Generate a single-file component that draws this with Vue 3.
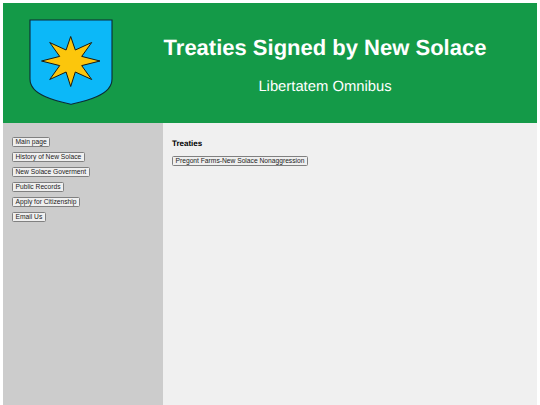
<template>
  <div class="page">
    <header class="banner">
      <div class="crest">
        <svg width="84" height="88" viewBox="0 0 84 88">
          <path d="M1 1H83V60C83 68 76 74 68 77.500C58 82 48 84 42 85.300C36 84 26 82 16 77.500C8 74 1 68 1 60Z" fill="#0cb8f8" stroke="#0c2a35" stroke-width="1.1" />
          <path d="M41.700 17.500 L46.300 31 L62.700 23.500 L52.700 37.400 L71 42 L52.700 46.600 L62.700 60.500 L46.300 53 L41.700 67.500 L37.100 53 L20.700 60.500 L30.700 46.600 L12.500 42 L30.700 37.400 L20.700 23.500 L37.100 31Z" fill="#fcc60c" stroke="#1a1a10" stroke-width="1" stroke-linejoin="miter" />
        </svg>
      </div>
      <div class="titles">
        <h1>Treaties Signed by New Solace</h1>
        <p>Libertatem Omnibus</p>
      </div>
    </header>
    <div class="body">
      <nav class="side">
        <button v-for="l in links" :key="l" class="btn">{{ l }}</button>
      </nav>
      <main class="content">
        <h2>Treaties</h2>
        <button class="btn">Pregont Farms-New Solace Nonaggression</button>
      </main>
    </div>
  </div>
</template>

<script setup>
const links = [
  'Main page',
  'History of New Solace',
  'New Solace Goverment',
  'Public Records',
  'Apply for Citizenship',
  'Email Us',
]
</script>

<style>
html, body { margin: 0; background: #fff; }
</style>

<style scoped>
.page {
  box-sizing: border-box;
  width: 540px;
  height: 405px;
  padding: 3px 3px 0;
  display: flex;
  flex-direction: column;
  font-family: "Liberation Sans", Arial, sans-serif;
  text-rendering: geometricPrecision;
  overflow: hidden;
}
.banner {
  height: 120px;
  flex: none;
  background: #149a48;
  display: flex;
  color: #fff;
}
.crest {
  width: 110px;
  flex: none;
  padding: 16px 0 0 26px;
  box-sizing: border-box;
}
.crest svg { display: block; }
.titles {
  flex: 1;
  text-align: center;
  padding-top: 32px;
}
h1 {
  margin: 0;
  font-size: 22px;
  line-height: 25px;
  font-weight: bold;
}
.titles p {
  margin: 18px 0 0;
  font-size: 14.8px;
  line-height: 18px;
}
.body {
  flex: 1;
  display: flex;
  min-height: 0;
}
.side {
  width: 160px;
  flex: none;
  background: #cccccc;
  box-sizing: border-box;
  padding: 14px 0 0 9px;
  display: flex;
  flex-direction: column;
  align-items: flex-start;
  gap: 5px;
}
.content {
  flex: 1;
  background: #f0f0f0;
  padding: 15px 0 0 9px;
  display: flex;
  flex-direction: column;
  align-items: flex-start;
}
h2 {
  margin: 0 0 7px;
  font-size: 8px;
  line-height: 11px;
  font-weight: bold;
  color: #000;
}
.btn {
  box-sizing: border-box;
  height: 10px;
  padding: 0 2.5px;
  margin: 0;
  font-family: inherit;
  font-size: 6.7px;
  line-height: 8px;
  color: #222;
  background: #efefef;
  border: 1px solid #808080;
  border-radius: 1.5px;
  white-space: nowrap;
}
</style>
